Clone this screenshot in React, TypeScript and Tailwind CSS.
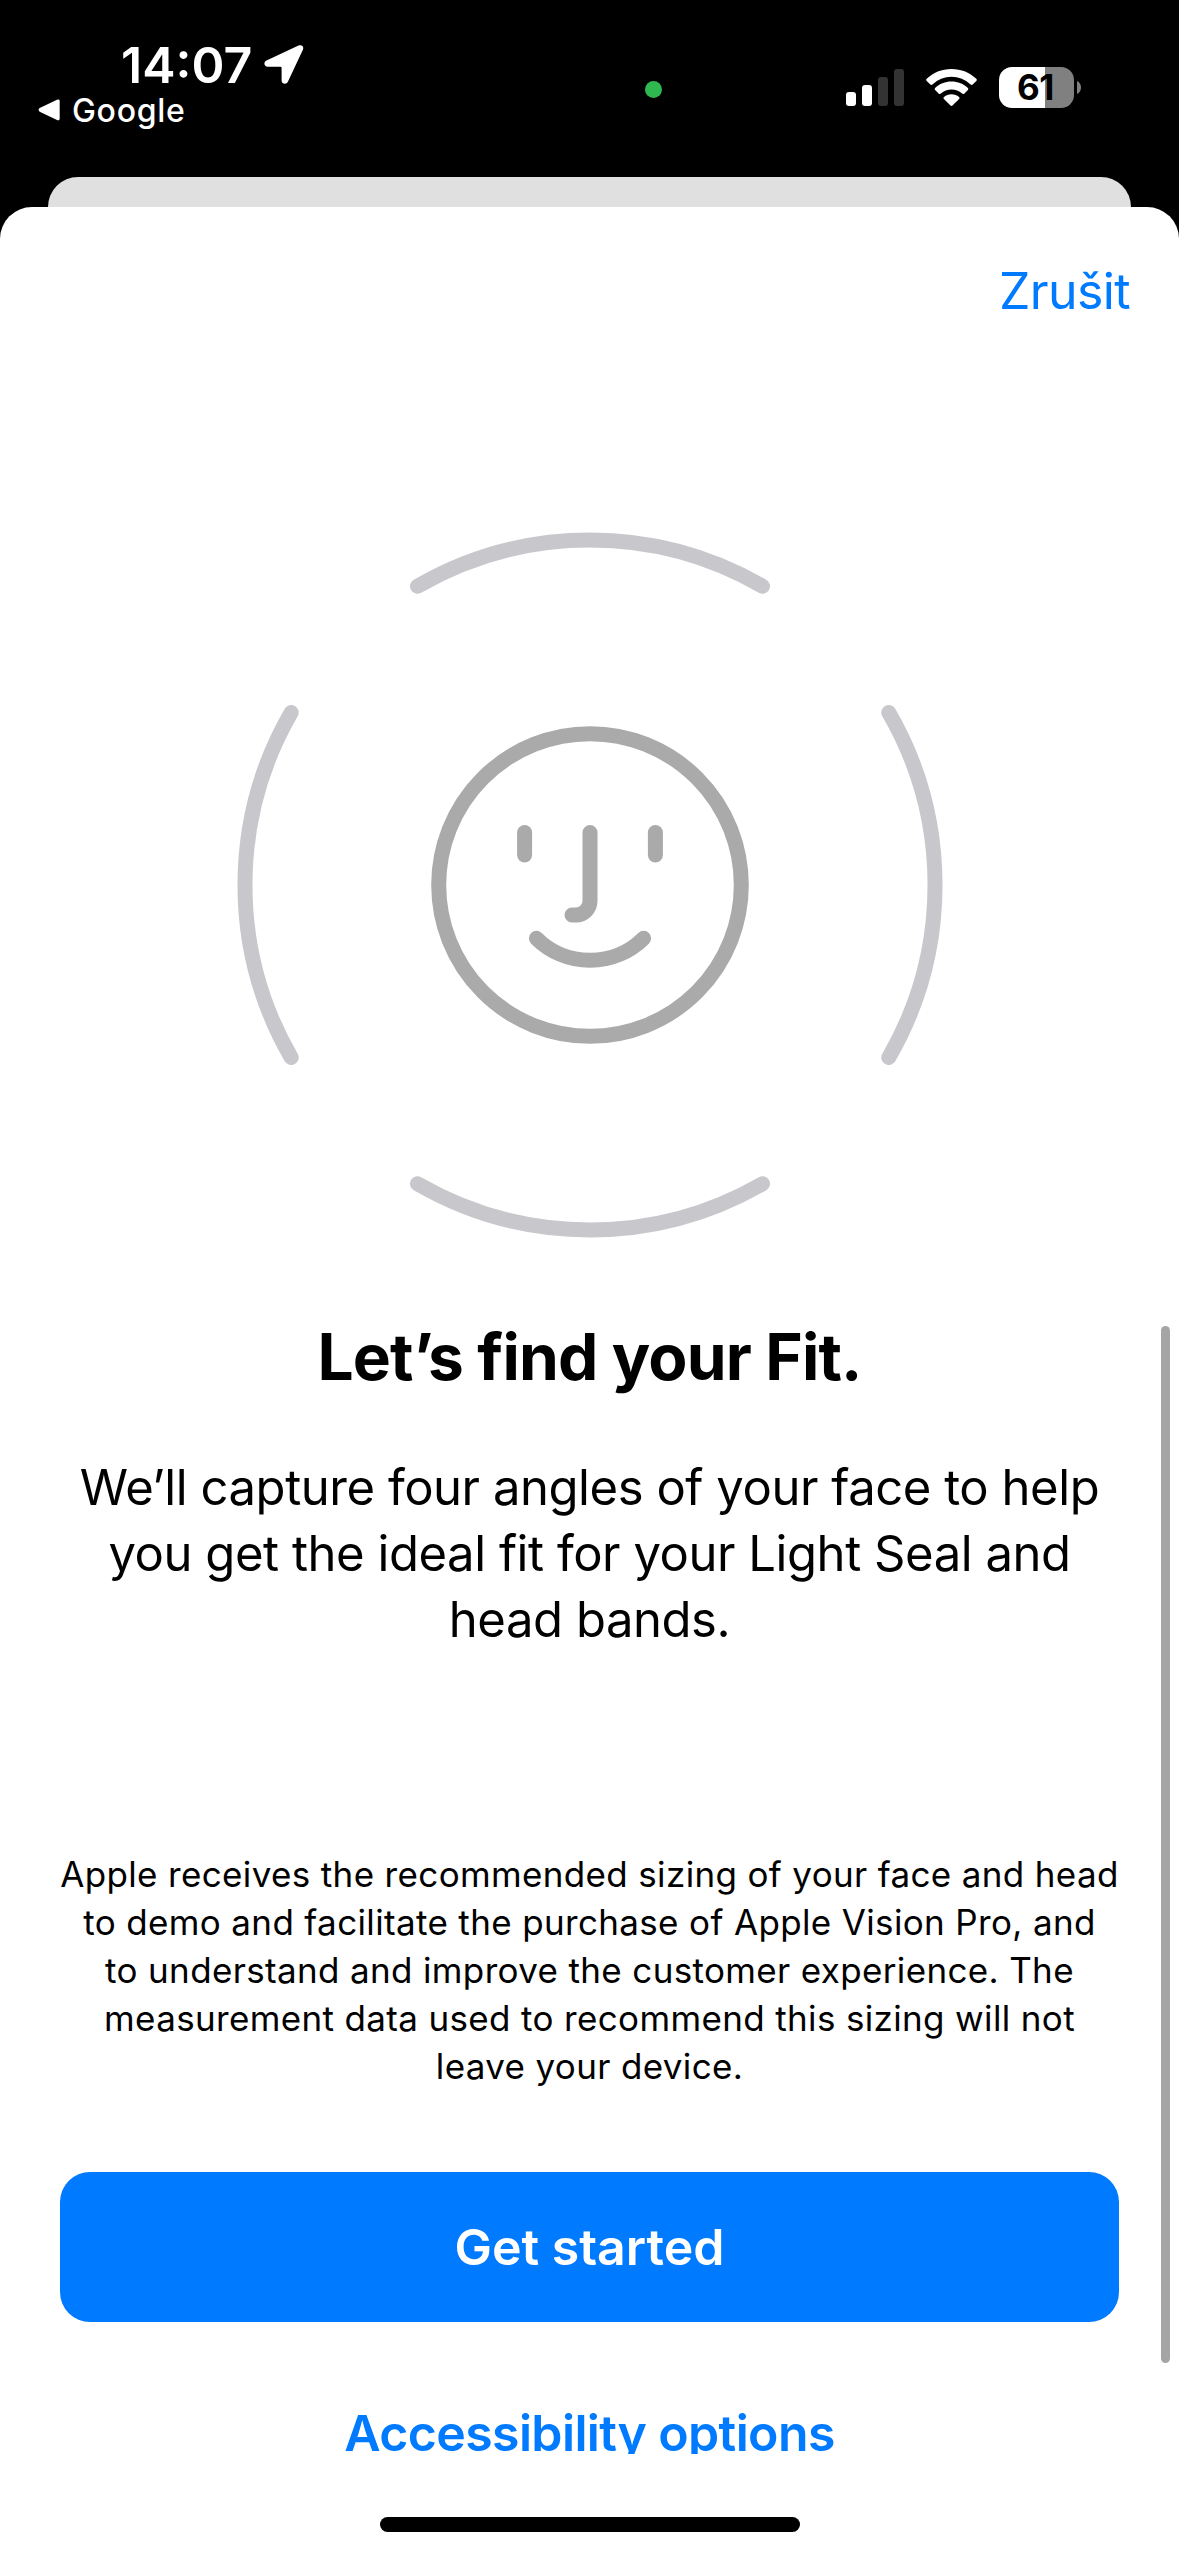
import clsx from "clsx";

const bodyLines = [
  "We’ll capture four angles of your face to help",
  "you get the ideal fit for your Light Seal and",
  "head bands.",
];

const privacyLines = [
  "Apple receives the recommended sizing of your face and head",
  "to demo and facilitate the purchase of Apple Vision Pro, and",
  "to understand and improve the customer experience. The",
  "measurement data used to recommend this sizing will not",
  "leave your device.",
];

const signalBars = [
  { height: "h-[14px]", on: true },
  { height: "h-[21px]", on: true },
  { height: "h-[29px]", on: false },
  { height: "h-[37px]", on: false },
];

const LocationArrow = () => (
  <svg className="w-[40px] h-[40px]" viewBox="0 0 40 40" fill="#fff">
    <path d="M34.5.6C37.8-.8 40.2 1.500 38.900 4.800L24 36.600C22.500 40 17.600 39.200 17.600 35.500V22.900Q17.600 21.800 16.500 21.800H3.700C.1 21.800-.9 17 2.500 15.400Z" />
  </svg>
);

const WifiIcon = () => (
  <svg className="w-[51px] h-[37px]" viewBox="0 0 51 37" fill="#fff">
    <path d="M25.500 0C35.200 0 44 3.700 50.300 9.800Q51.300 10.900 50.300 12L46.700 15.500Q45.600 16.300 44.600 15.400A27.600 27.600 0 0 0 6.400 15.400Q5.400 16.300 4.300 15.500L.7 12Q-.3 10.900.7 9.800C7 3.700 15.800 0 25.500 0Z" />
    <path d="M25.500 12.500C31.800 12.500 37.600 14.900 41.900 18.900Q42.900 20 41.900 21.100L38.200 24.700Q37.200 25.500 36.100 24.600A15.800 15.800 0 0 0 14.900 24.600Q13.800 25.500 12.800 24.700L9.100 21.100Q8.100 20 9.100 18.900C13.400 14.900 19.200 12.500 25.500 12.500Z" />
    <path d="M25.500 25.300C28.400 25.300 31 26.200 33 27.900Q34 28.900 33.100 30L26.500 36.500Q25.500 37.300 24.500 36.500L17.900 30Q17 28.900 18 27.900C20 26.200 22.600 25.300 25.500 25.300Z" />
  </svg>
);

const Battery = () => (
  <div className="flex items-center gap-[3px]">
    <div className="w-[75px] h-[41px] rounded-[13px] overflow-hidden flex items-center justify-center bg-linear-to-r from-white from-[46px] to-[#808080] to-[46px]">
      <span className="pr-[2px] text-[35px] leading-[41px] font-bold text-black tracking-[-0.5px]">
        61
      </span>
    </div>
    <svg className="w-[4px] h-[13px]" viewBox="0 0 4 13" fill="#808080">
      <path d="M0 0C2.400.9 4 3.400 4 6.500S2.400 12.100 0 13Z" />
    </svg>
  </div>
);

const StatusBar = () => (
  <header className="h-[177px] shrink-0 flex text-white">
    <div className="w-[645px] flex flex-col">
      <div className="flex items-center mt-[40px] ml-[121px] h-[50px]">
        <span className="w-[143px] text-[50px] leading-[50px] font-semibold whitespace-nowrap">
          14:07
        </span>
        <LocationArrow />
      </div>
      <div className="flex items-center ml-[38px] h-[40px]">
        <svg className="w-[22px] h-[22px]" viewBox="0 0 22 22" fill="#fff">
          <path d="M19 .7C20.600 0 21.700.6 21.700 2.200V19.500C21.700 21.100 20.600 21.700 19 21L1.700 12.700C.2 11.900.2 9.900 1.700 9.100Z" />
        </svg>
        <span className="ml-[12px] pt-[2px] text-[32px] leading-[40px] font-medium tracking-[0.7px]">
          Google
        </span>
      </div>
    </div>
    <div className="mt-[81px] size-[17px] rounded-full bg-[#30b850]" />
    <div className="flex mt-[67px] ml-[184px] h-[41px]">
      <div className="flex items-end gap-[6px] h-[39px]">
        {signalBars.map((bar) => (
          <div
            key={bar.height}
            className={clsx(
              "w-[10px] rounded-[3px]",
              bar.height,
              bar.on ? "bg-white" : "bg-[#333]"
            )}
          />
        ))}
      </div>
      <div className="ml-[22px] mt-[2px] mr-[22px]">
        <WifiIcon />
      </div>
      <Battery />
    </div>
  </header>
);

const FaceIllustration = () => (
  <svg
    className="w-[706px] h-[706px] ml-[237px] mt-[157px] shrink-0"
    viewBox="-353 -353 706 706"
    fill="none"
    strokeWidth="15"
    strokeLinecap="round"
  >
    {[0, 90, 180, 270].map((angle) => (
      <path
        key={angle}
        d="M-172.500-298.800A345 345 0 0 1 172.500-298.800"
        stroke="#c8c7cc"
        transform={`rotate(${angle})`}
      />
    ))}
    <g stroke="#aaaaaa">
      <circle r="151.300" />
      <path d="M-65.400-52.500V-30" />
      <path d="M65.400-52.500V-30" />
      <path d="M0-52.500V16A14 14 0 0 1-14 30H-18" />
      <path d="M-53.600 53.300A76.300 76.300 0 0 0 53.600 53.300" />
    </g>
  </svg>
);

const App = () => {
  return (
    <main className="w-[1179px] h-[2556px] bg-black flex flex-col overflow-hidden font-['Inter',sans-serif]">
      <StatusBar />
      <div className="h-[30px] shrink-0 mx-12 rounded-t-[30px] bg-[#e0e0e0]" />
      <section className="relative flex-1 flex flex-col bg-white rounded-t-[32px] text-black text-center">
        <nav className="h-[168px] shrink-0 flex items-center justify-end pr-[49px]">
          <button className="text-[50px] text-[#007aff] tracking-[-0.6px]">
            Zrušit
          </button>
        </nav>
        <FaceIllustration />
        <h1 className="mt-[79px] text-[64px] leading-[80px] font-bold tracking-[-0.85px]">
          Let’s find your Fit.
        </h1>
        <p className="mt-[58px] text-[49px] leading-[66px] tracking-[-0.45px] whitespace-nowrap">
          {bodyLines.map((line) => (
            <span key={line} className="block">
              {line}
            </span>
          ))}
        </p>
        <p className="mt-[197px] text-[35px] leading-[48px] tracking-[0.35px] whitespace-nowrap">
          {privacyLines.map((line) => (
            <span key={line} className="block">
              {line}
            </span>
          ))}
        </p>
        <button className="mt-[82px] mx-[60px] h-[150px] shrink-0 rounded-[30px] bg-[#007aff] text-white text-[50px] font-semibold">
          Get started
        </button>
        <button className="mt-[78px] h-[54px] shrink-0 overflow-hidden flex justify-center text-[#007aff] text-[50px] leading-[66px] font-semibold tracking-[-0.62px]">
          Accessibility options
        </button>
        <div className="mt-[63px] mx-auto w-[420px] h-[15px] shrink-0 rounded-full bg-black" />
        <div className="absolute right-[9px] top-[1119px] w-[9px] h-[1037px] rounded-full bg-[#a5a5a5]" />
      </section>
    </main>
  );
};

export default App;
